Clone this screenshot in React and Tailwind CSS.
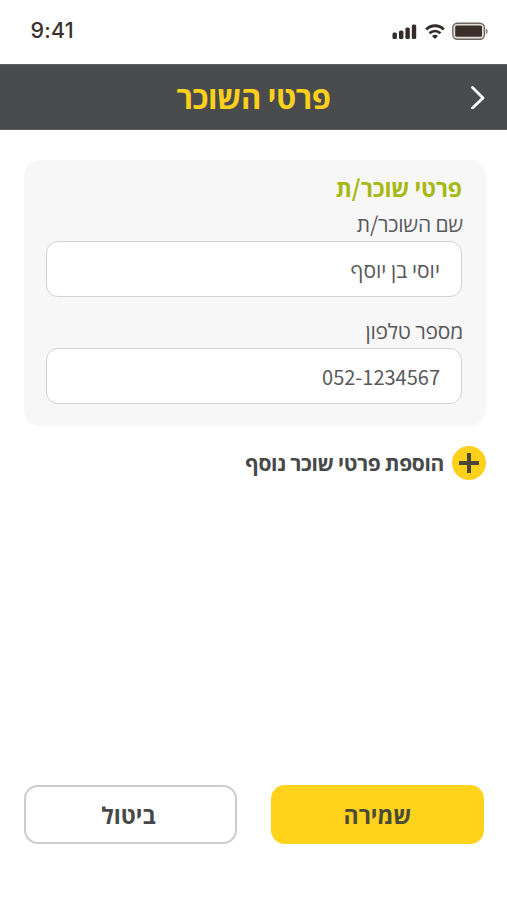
import { useState } from "react";

const initialTenant = { name: "יוסי בן יוסף", phone: "052-1234567" };

const StatusBar = () => (
    <div dir="ltr" className="h-16 flex items-start justify-between pl-[30.5px] pr-[19px] text-[#3a302c]">
        <span className="mt-4 font-['Inter',sans-serif] text-[21.5px] leading-7 font-medium tracking-[0.2px]">9:41</span>
        <div className="mt-[22px] flex items-center">
            <svg width="25" height="18" viewBox="0 0 25 18" fill="#332c2a">
                <rect x="0.5" y="10.5" width="4.4" height="6.5" rx="1.5" />
                <rect x="7" y="8.5" width="4.4" height="8.5" rx="1.5" />
                <rect x="13.4" y="5.5" width="4.4" height="11.5" rx="1.5" />
                <rect x="19.8" y="2.5" width="4.4" height="14.5" rx="1.5" />
            </svg>
            <svg className="ml-2" width="20" height="18" viewBox="0 0 20 18" fill="none" stroke="#332c2a" strokeWidth="2.8">
                <path d="M1.2 7.4C6.2 2.5 13.8 2.5 18.8 7.4" />
                <path d="M4.5 11.3C7.8 8.4 12.2 8.4 15.5 11.3" />
                <path d="M7 13.9C8.8 12.4 11.2 12.4 13 13.9L10 17Z" fill="#332c2a" stroke="none" />
            </svg>
            <svg className="ml-[7px]" width="36" height="18" viewBox="0 0 36 18">
                <rect x="0.8" y="1.2" width="31.6" height="16" rx="4.5" fill="#e5dfd9" stroke="#6f6762" strokeWidth="1.4" />
                <rect x="3.2" y="3.6" width="26.8" height="11.2" rx="1.5" fill="#3b2f29" />
                <path d="M33.8 6.5C36.3 7 36.3 11.4 33.8 12Z" fill="#8d8681" />
            </svg>
        </div>
    </div>
);

const Header = ({ title }) => (
    <header className="h-[66px] bg-[#494b4c] border-y border-[#5c5e5f] grid grid-cols-[60px_1fr_60px] items-center">
        <button aria-label="חזרה" className="flex justify-start ps-[21px]">
            <svg width="16" height="24" viewBox="0 0 16 24" fill="none" stroke="#fff" strokeWidth="2.8" strokeLinecap="round" strokeLinejoin="round">
                <path d="M2.5 2.5L13 13L2.5 23" />
            </svg>
        </button>
        <h1 className="pb-[3px] text-center text-[31px] leading-none font-bold tracking-[-0.4px] text-[#fdd01c]">{title}</h1>
    </header>
);

const Field = ({ label, value, type = "text", onChange }) => (
    <label className="block">
        <span className="block h-[34px] -ms-px text-[21px] leading-8 tracking-[-0.2px] text-[#58595b]">{label}</span>
        <input
            dir={type === "tel" ? "ltr" : "rtl"}
            type={type}
            value={value}
            onChange={(e) => onChange(e.target.value)}
            className={`block w-full h-14 rounded-xl border-[1.5px] border-[#d2d2d2] bg-white px-[21px] text-right text-[#58595b] outline-none ${type === "tel" ? "text-[20px]" : "text-[21px]"}`}
        />
    </label>
);

const App = () => {
    const [tenant, setTenant] = useState(initialTenant);

    return (
        <div dir="rtl" className="h-screen flex flex-col bg-white font-['Noto_Sans_CJK_SC','Open_Sans',sans-serif]">
            <StatusBar />
            <Header title="פרטי השוכר" />

            <main className="flex-1 ps-[21px] pe-6 pt-[30px]">
                <section className="h-[266px] rounded-2xl bg-[#f7f7f7] ps-6 pe-[22px] pt-3">
                    <h2 className="h-[35px] text-[23px] leading-[30px] font-bold tracking-[-0.1px] text-[#a6b912]">פרטי שוכר/ת</h2>
                    <div className="flex flex-col gap-[17px]">
                        <Field label="שם השוכר/ת" value={tenant.name} onChange={(name) => setTenant({ ...tenant, name })} />
                        <Field label="מספר טלפון" type="tel" value={tenant.phone} onChange={(phone) => setTenant({ ...tenant, phone })} />
                    </div>
                </section>

                <button className="mt-5 flex items-center gap-2">
                    <svg width="34" height="34" viewBox="0 0 34 34">
                        <circle cx="17" cy="17" r="17" fill="#fdd01c" />
                        <path d="M7 17H27M17 7V27" stroke="#4a4633" strokeWidth="4" />
                    </svg>
                    <span className="text-[21px] font-bold tracking-[-0.35px] text-[#47484a]">הוספת פרטי שוכר נוסף</span>
                </button>
            </main>

            <footer className="grid grid-cols-2 gap-[34px] ps-[23px] pe-6 pb-14">
                <button className="h-[59px] rounded-[14px] bg-[#ffd21c] text-[23px] font-bold text-[#4a4a38]">שמירה</button>
                <button className="h-[59px] rounded-[14px] border-[2.5px] border-[#cdcdcd] bg-white pr-1 text-[23px] font-bold text-[#47484a]">ביטול</button>
            </footer>
        </div>
    );
};

export default App;
